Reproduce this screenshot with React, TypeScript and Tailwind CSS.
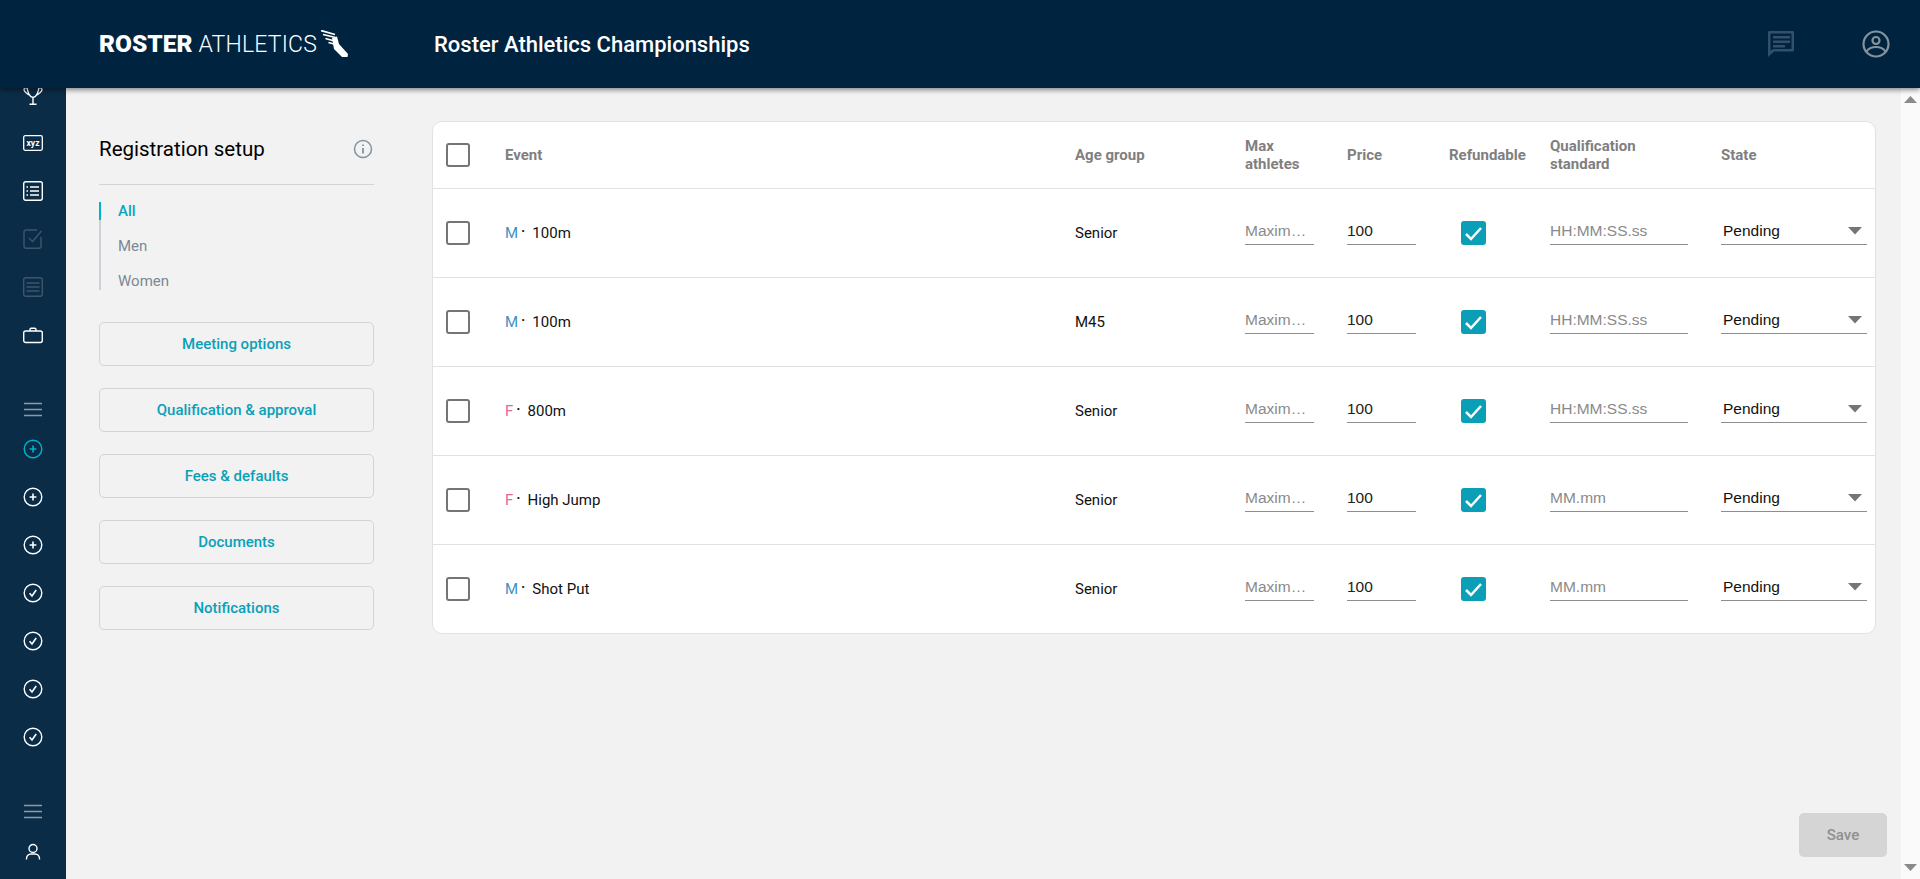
import React from 'react';

const rows = [
  { sex: 'M', event: '100m', age: 'Senior', standard: 'HH:MM:SS.ss' },
  { sex: 'M', event: '100m', age: 'M45', standard: 'HH:MM:SS.ss' },
  { sex: 'F', event: '800m', age: 'Senior', standard: 'HH:MM:SS.ss' },
  { sex: 'F', event: 'High Jump', age: 'Senior', standard: 'MM.mm' },
  { sex: 'M', event: 'Shot Put', age: 'Senior', standard: 'MM.mm' },
];

const sideButtons = ['Meeting options', 'Qualification & approval', 'Fees & defaults', 'Documents', 'Notifications'];

const gridCols = 'grid grid-cols-[72px_570px_170px_102px_102px_101px_171px_1fr] items-center';

const Ico = ({ children, className = 'text-white' }: { children: React.ReactNode; className?: string }) => (
  <svg width="20" height="20" viewBox="0 0 20 20" fill="none" stroke="currentColor" strokeWidth="1.4" className={className}>
    {children}
  </svg>
);

const CircleCheck = () => (
  <Ico>
    <circle cx="10" cy="10" r="8.8" />
    <path d="M6.6 10.2l2.4 2.8 4.2-6" strokeWidth="1.6" />
  </Ico>
);

const CirclePlus = ({ className }: { className?: string }) => (
  <Ico className={className}>
    <circle cx="10" cy="10" r="8.8" />
    <path d="M10 6.6v6.8M6.6 10h6.8" strokeWidth="1.6" />
  </Ico>
);

const MenuLines = () => (
  <Ico className="text-[#8b9aa8]">
    <path d="M1 3.5h18M1 9.5h18M1 15.5h18" />
  </Ico>
);

const SideIcon = ({ children }: { children: React.ReactNode }) => (
  <div className="h-12 flex items-center justify-center">{children}</div>
);

const Sidebar = () => (
  <aside className="w-[66px] shrink-0 -mt-[17px] bg-[#0b2c47] flex flex-col pb-[2px]">
    <SideIcon>
      <Ico>
        <path d="M4 0C4 8 7 12 10 12.500C13 12 16 8 16 0M4 3C1.500 2 .5 4 1.500 6C2.500 8 4.500 9 6 10M16 3C18.500 2 19.500 4 18.500 6C17.500 8 15.500 9 14 10M10 12.500V19M6.500 19.300H13.500" />
      </Ico>
    </SideIcon>
    <SideIcon>
      <svg width="20" height="16" viewBox="0 0 20 16" fill="none" className="text-white">
        <rect x=".7" y=".7" width="18.600" height="14.600" rx="1.500" stroke="currentColor" strokeWidth="1.300" />
        <text x="10" y="10.800" textAnchor="middle" fontSize="8.500" fontWeight="700" fill="currentColor" fontFamily="Roboto, sans-serif">xyz</text>
      </svg>
    </SideIcon>
    <SideIcon>
      <Ico>
        <rect x=".7" y=".7" width="18.600" height="18.600" rx="2" />
        <path d="M7 6h9M7 10h9M7 14h9" strokeWidth="1.500" />
        <path d="M3.500 6h1.500M3.500 10h1.500M3.500 14h1.500" strokeWidth="1.500" />
      </Ico>
    </SideIcon>
    <SideIcon>
      <Ico className="text-[#3e566b]">
        <path d="M18 8v9.300a2 2 0 0 1-2 2H3a2 2 0 0 1-2-2V3a2 2 0 0 1 2-2h11" />
        <path d="M6 9l3.500 3.500L18.500 2" />
      </Ico>
    </SideIcon>
    <SideIcon>
      <Ico className="text-[#3e566b]">
        <rect x=".7" y=".7" width="18.600" height="18.600" rx="2" />
        <path d="M3.500 6h13M3.500 10h13M3.500 14h13" />
      </Ico>
    </SideIcon>
    <SideIcon>
      <Ico>
        <rect x=".7" y="6" width="18.600" height="11.500" rx="2" />
        <path d="M7 6V4.500A1.200 1.200 0 0 1 8.200 3.300h3.600A1.200 1.200 0 0 1 13 4.500V6" />
      </Ico>
    </SideIcon>
    <div className="h-[30px] mt-9 flex items-center justify-center"><MenuLines /></div>
    <SideIcon><CirclePlus className="text-[#00b2cc]" /></SideIcon>
    <SideIcon><CirclePlus className="text-white" /></SideIcon>
    <SideIcon><CirclePlus className="text-white" /></SideIcon>
    <SideIcon><CircleCheck /></SideIcon>
    <SideIcon><CircleCheck /></SideIcon>
    <SideIcon><CircleCheck /></SideIcon>
    <SideIcon><CircleCheck /></SideIcon>
    <div className="mt-auto h-[34px] flex items-center justify-center"><MenuLines /></div>
    <SideIcon>
      <Ico>
        <circle cx="10" cy="5.500" r="4" />
        <path d="M3.500 16.500v-1a4.500 4.500 0 0 1 4.500-4.500h4a4.500 4.500 0 0 1 4.500 4.500v1" />
      </Ico>
    </SideIcon>
  </aside>
);

const Header = () => (
  <header className="relative z-10 h-[88px] shrink-0 bg-[#00233f] shadow-[0_2px_5px_rgba(0,0,0,0.45)] flex items-center pl-[99px] pr-[30px]">
    <div className="w-[335px] flex items-center text-white leading-none">
      <span className="font-black text-[24.500px]">ROSTER</span>
      <span className="font-light text-[23px] ml-[6px] tracking-[0.2px]">ATHLETICS</span>
      <svg width="27" height="27" viewBox="0 0 27 27" className="ml-[4px] -mt-[2px]" fill="#fff" stroke="#fff">
        <path d="M11 8L16 6.500L18 14L27 24L26.500 27H21L13 19Z" stroke="none" />
        <path d="M0 .5L14 4.500M2 4.500L14.500 7.500M4.500 8.500L13.500 11M7.500 12.500L13 14" strokeWidth="1.700" />
      </svg>
    </div>
    <div className="flex-1 text-white text-[22px] font-medium">Roster Athletics Championships</div>
    <svg width="28" height="28" viewBox="0 0 28 28" fill="#33506a" className="mr-[67px]">
      <path d="M2 1h24a1.500 1.500 0 0 1 1 1.500V20a1.500 1.500 0 0 1-1 1.500H7L1 27V2.500A1.500 1.500 0 0 1 2 1zm1.500 2.500v17.500l2.500-2h18.500V3.500z" fillRule="evenodd" />
      <path d="M6 6h17v2.500H6zM6 10.500h17V13H6zM6 15h12v2.500H6z" />
    </svg>
    <svg width="28" height="28" viewBox="0 0 28 28" fill="none" stroke="#84949f" strokeWidth="2.200">
      <circle cx="14" cy="14" r="12.500" />
      <circle cx="14" cy="10.500" r="3.500" />
      <path d="M4.500 21.500c2-3 5.500-4.500 9.500-4.500s7.500 1.500 9.500 4.500" />
    </svg>
  </header>
);

const SidePanel = () => (
  <div className="w-[275px] shrink-0 ml-[33px] pt-[33px]">
    <div className="h-[64px] flex items-start justify-between border-b border-[#d4d4d4]">
      <h2 className="text-[20.500px] leading-[56px] text-black h-[56px]">Registration setup</h2>
      <svg width="20" height="20" viewBox="0 0 20 20" fill="none" stroke="#84929e" strokeWidth="1.500" className="mr-[1px] mt-[18px]">
        <circle cx="10" cy="10" r="8.500" />
        <path d="M10 9v5.500M10 5.500v1.500" strokeWidth="1.800" />
      </svg>
    </div>
    <div className="mt-[17px] border-l-2 border-[#ccd1d8] flex flex-col gap-[17px] relative">
      <div className="absolute -left-[2px] top-0 h-[18px] w-[2px] bg-[#00b2cc]" />
      <div className="pl-[17px] text-[15px] leading-[18px] font-medium text-[#0aa5bd]">All</div>
      <div className="pl-[17px] text-[15px] leading-[18px] text-[#7c8894]">Men</div>
      <div className="pl-[17px] text-[15px] leading-[18px] text-[#7c8894]">Women</div>
    </div>
    <div className="mt-[32px] flex flex-col gap-[22px]">
      {sideButtons.map((b) => (
        <button
          key={b}
          className="h-[44px] rounded-[5px] border border-[#d4d4d4] text-[15px] font-medium text-[#0aa0b8]"
        >
          {b}
        </button>
      ))}
    </div>
  </div>
);

const Check = ({ on }: { on?: boolean }) =>
  on ? (
    <div className="w-[25px] h-[24px] rounded-[3px] bg-[#0a9fb6] flex items-center justify-center">
      <svg width="21" height="18" viewBox="0 0 21 18" fill="none" stroke="#fff" strokeWidth="2.500">
        <path d="M3 10l5 5 10-11" />
      </svg>
    </div>
  ) : (
    <div className="w-[24px] h-[24px] rounded-[3px] border-2 border-[#757575] bg-white" />
  );

const Field = ({ placeholder, value, width }: { placeholder?: string; value?: string; width: string }) => (
  <input
    readOnly
    placeholder={placeholder}
    value={value}
    className={`${width} h-[24px] pb-[3px] pr-[4px] border-b border-[#8d8d8d] bg-transparent text-[15.500px] text-[#212121] placeholder:text-[#8a8a8a] text-ellipsis outline-none`}
    style={{ fontFamily: '"Liberation Sans", sans-serif' }}
  />
);

const HeadCell = ({ children }: { children: React.ReactNode }) => (
  <div className="text-[15px] leading-[18px] font-bold text-[#7f7f7f]">{children}</div>
);

const EventTable = () => (
  <div className="w-[1444px] ml-[58px] mt-[33px] self-start bg-white rounded-[10px] border border-[#e2e2e2] overflow-hidden">
    <div className={`${gridCols} h-[66px]`}>
      <div className="pl-[13px]"><Check /></div>
      <HeadCell>Event</HeadCell>
      <HeadCell>Age group</HeadCell>
      <HeadCell>Max<br />athletes</HeadCell>
      <HeadCell>Price</HeadCell>
      <HeadCell>Refundable</HeadCell>
      <HeadCell>Qualification<br />standard</HeadCell>
      <HeadCell>State</HeadCell>
    </div>
    {rows.map((r, i) => (
      <div key={i} className={`${gridCols} h-[89px] border-t border-[#e2e2e2] text-[15px] text-[#111]`}>
        <div className="pl-[13px]"><Check /></div>
        <div className="flex items-center">
          <span className={r.sex === 'M' ? 'text-[#3c8fc6]' : 'text-[#e2689d]'}>{r.sex}</span>
          <span className="ml-[3px] mr-[7px] -mt-[3px] text-[#111] font-medium">·</span>
          <span>{r.event}</span>
        </div>
        <div>{r.age}</div>
        <Field placeholder="Maximum athletes" width="w-[69px]" />
        <Field value="100" width="w-[69px]" />
        <div className="pl-[12px]"><Check on /></div>
        <Field placeholder={r.standard} width="w-[138px]" />
        <div
          className="w-[146px] h-[24px] pb-[3px] pl-[2px] pr-[5px] border-b border-[#8d8d8d] flex items-center justify-between text-[15.500px] text-[#111]"
          style={{ fontFamily: '"Liberation Sans", sans-serif' }}
        >
          Pending
          <svg width="14" height="8" viewBox="0 0 14 8" fill="#757575"><path d="M0 0h14L7 7.500z" /></svg>
        </div>
      </div>
    ))}
  </div>
);

export default function App() {
  return (
    <div className="h-screen flex flex-col overflow-hidden" style={{ fontFamily: 'Roboto, sans-serif' }}>
      <Header />
      <div className="flex-1 flex min-h-0">
        <Sidebar />
        <main className="flex-1 bg-[#f2f2f2] flex flex-col">
          <div className="flex">
            <SidePanel />
            <EventTable />
          </div>
          <div className="mt-auto flex justify-end pr-[14px] pb-[22px]">
            <button className="w-[88px] h-[44px] rounded-[5px] bg-[#d5d5d5] text-[15px] font-medium text-[#8f8f8f]">Save</button>
          </div>
        </main>
        <div className="w-[19px] shrink-0 bg-[#fafafa] flex flex-col items-center justify-between pt-[8px] pb-[8px]">
          <svg width="13" height="7" viewBox="0 0 13 7" fill="#8a8a8a"><path d="M6.500 0L13 7H0z" /></svg>
          <svg width="13" height="7" viewBox="0 0 13 7" fill="#8a8a8a"><path d="M0 0h13L6.500 7z" /></svg>
        </div>
      </div>
    </div>
  );
}
